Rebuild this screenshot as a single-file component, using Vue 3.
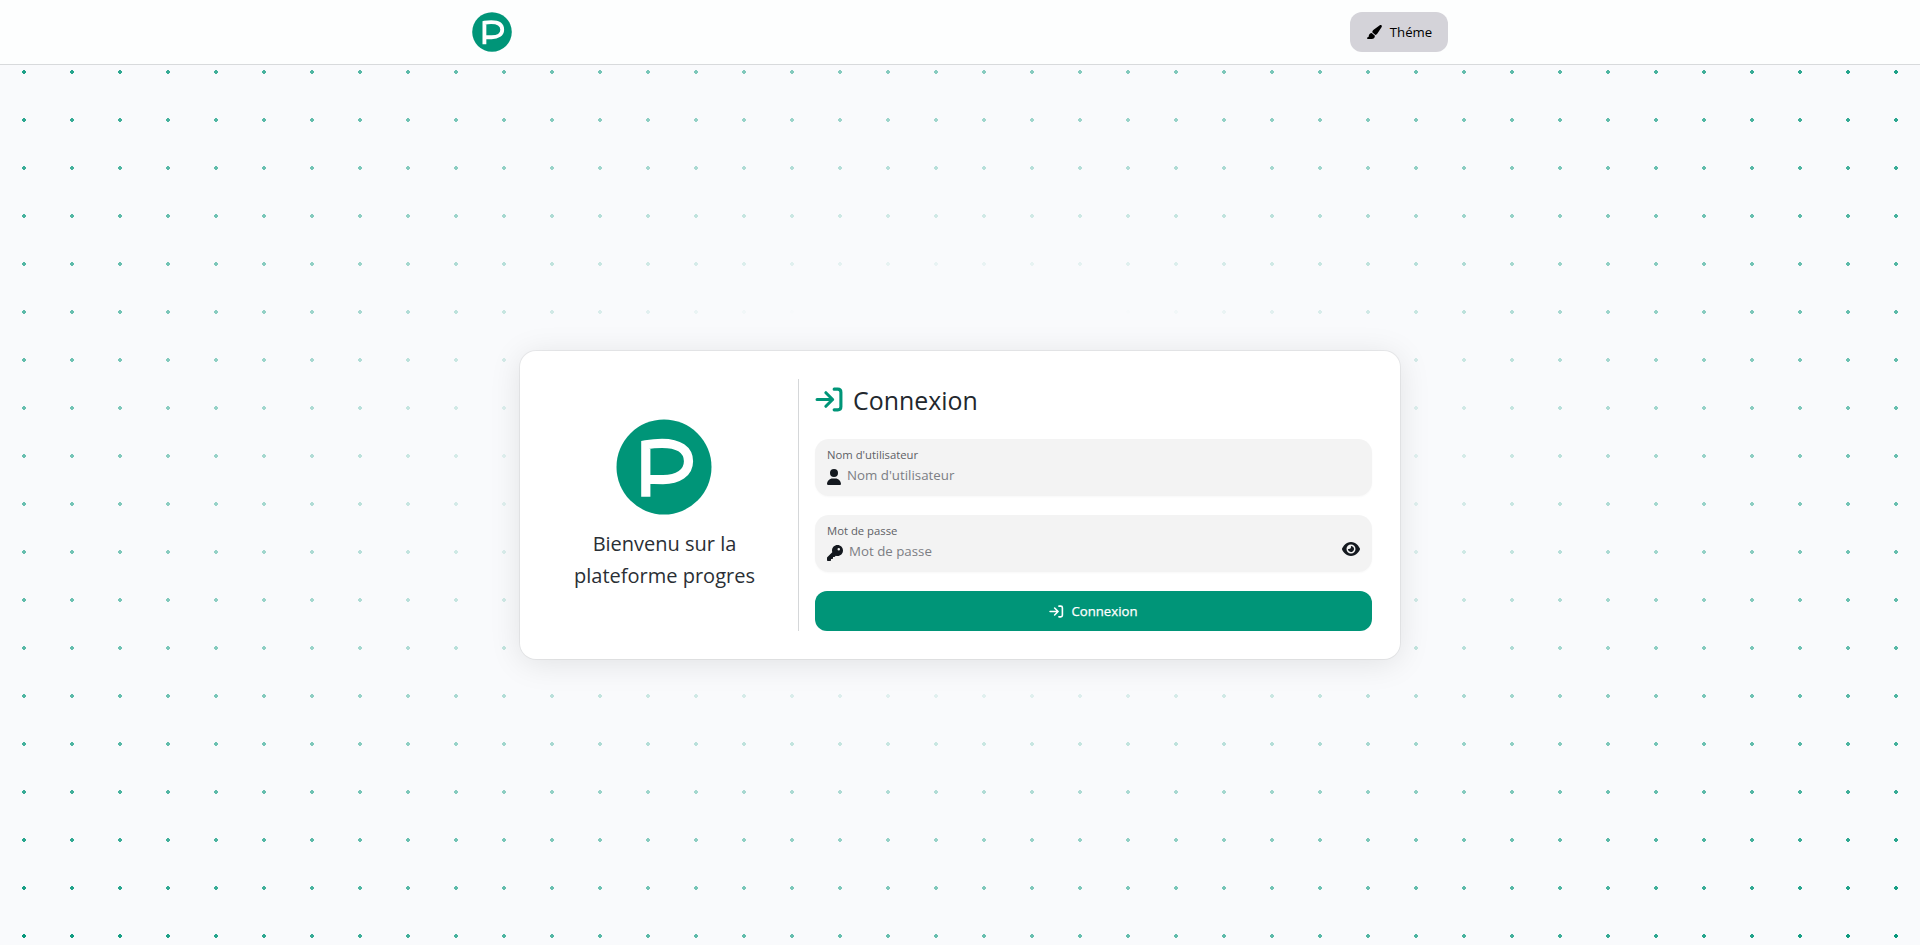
<script setup>
</script>

<template>
  <div class="page">
    <div class="dots"></div>
    <header class="bar">
      <div class="inner">
        <svg class="logo" viewBox="0 0 96 96">
          <circle cx="48" cy="48" r="47.5" fill="#009578" />
          <path d="M29.800 77.700V25.800Q38 24.300 46 24.300C63 24.300 72.500 31 72.500 42.300C72.500 54 62 60.600 47 60.600Q38 60.600 29.800 60" fill="none" stroke="#fff" stroke-width="9.200" />
        </svg>
        <button class="theme">
          <svg viewBox="0 0 576 512"><path d="M339.300 367.100c27.300-3.900 51.900-19.400 67.200-42.900L568.200 74.100c12.600-19.500 9.400-45.300-7.600-61.200S517.700-4.400 499.100 9.600L262.400 187.200c-24 18-38.200 46.100-38.400 76.100zm-19.600 25.400l-116-104.400C143.900 290.300 96 339.600 96 400c0 3.900.2 7.800.6 11.600C98.400 429.100 86.400 448 68.800 448H64c-17.700 0-32 14.300-32 32s14.300 32 32 32h144c61.900 0 112-50.100 112-112 0-2.500-.1-5-.3-7.500" /></svg>
          <span>Théme</span>
        </button>
      </div>
    </header>
    <main>
      <section class="card">
        <div class="welcome">
          <svg class="big" viewBox="0 0 96 96">
            <circle cx="48" cy="48" r="47.500" fill="#009578" />
            <path d="M29.800 77.700V25.800Q38 24.300 46 24.300C63 24.300 72.500 31 72.500 42.300C72.500 54 62 60.600 47 60.600Q38 60.600 29.800 60" fill="none" stroke="#fff" stroke-width="9.200" />
          </svg>
          <p>Bienvenu sur la<br />plateforme progres</p>
        </div>
        <form class="login" @submit.prevent>
          <h1>
            <svg viewBox="0 0 28 28"><path d="M2 14H17M10.500 7.500L17 14L10.500 20.500M18.500 4H22Q25 4 25 7V21Q25 24 22 24H18.500" /></svg>
            <span>Connexion</span>
          </h1>
          <div class="field">
            <label>Nom d'utilisateur</label>
            <div class="row">
              <svg class="user" viewBox="0 0 448 512"><path d="M224 256a128 128 0 1 0 0-256 128 128 0 1 0 0 256m-45.700 48C79.800 304 0 383.800 0 482.300 0 498.700 13.300 512 29.700 512h388.600c16.400 0 29.700-13.300 29.700-29.700 0-98.500-79.800-178.300-178.300-178.300z" /></svg>
              <span class="ph">Nom d'utilisateur</span>
            </div>
          </div>
          <div class="field">
            <label>Mot de passe</label>
            <div class="row">
              <svg class="key" viewBox="0 0 512 512"><path d="M336 352c97.200 0 176-78.800 176-176S433.200 0 336 0 160 78.800 160 176c0 18.700 2.900 36.800 8.300 53.700L7 391c-4.500 4.500-7 10.600-7 17v80c0 13.300 10.700 24 24 24h80c13.300 0 24-10.700 24-24v-40h40c13.300 0 24-10.700 24-24v-40h40c6.400 0 12.500-2.500 17-7l33.300-33.300c16.900 5.400 35 8.300 53.700 8.300m40-256a40 40 0 1 1 0 80 40 40 0 1 1 0-80" /></svg>
              <span class="ph">Mot de passe</span>
            </div>
            <svg class="eye" viewBox="0 0 576 512"><path fill-rule="evenodd" d="M288 32c-80.800 0-145.500 36.800-192.600 80.600C48.600 156 17.300 208 2.500 243.700c-3.300 7.900-3.300 16.700 0 24.600C17.300 304 48.600 356 95.400 399.400 142.500 443.200 207.200 480 288 480s145.500-36.800 192.600-80.600c46.800-43.500 78.100-95.400 93-131.100 3.300-7.900 3.300-16.700 0-24.600-14.900-35.700-46.200-87.700-93-131.100C433.500 68.800 368.800 32 288 32M144 256a144 144 0 1 1 288 0 144 144 0 1 1-288 0m144-64c0 35.300-28.700 64-64 64-7.100 0-13.900-1.200-20.300-3.300-5.500-1.800-11.900 1.600-11.700 7.400.3 6.900 1.300 13.800 3.200 20.700 13.700 51.200 66.400 81.600 117.600 67.900s81.600-66.400 67.900-117.600c-11.100-41.500-47.800-69.400-88.600-71.100-5.800-.2-9.200 6.100-7.400 11.700 2.100 6.400 3.300 13.200 3.300 20.300" /></svg>
          </div>
          <button class="submit">
            <svg viewBox="0 0 28 28"><path d="M2 14H17M10.500 7.500L17 14L10.500 20.500M18.500 4H22Q25 4 25 7V21Q25 24 22 24H18.500" /></svg>
            <span>Connexion</span>
          </button>
        </form>
      </section>
    </main>
  </div>
</template>

<style>
body { margin: 0; overflow: hidden; }
</style>
<style scoped>
* { box-sizing: border-box; }
.page { position: relative; height: 945px; display: flex; flex-direction: column; background: #f9fafc; font-family: "Open Sans", "Noto Sans", sans-serif; color: #14191f; }
.dots { position: absolute; inset: 0; background: radial-gradient(circle at center, #009578 2px, transparent 2px) 0 0 / 48px 48px; mask-image: radial-gradient(ellipse at center, transparent 26.5%, #000 100%); }
.bar { position: relative; height: 65px; border-bottom: 1px solid #d8dadc; background: #fdfefe; }
.inner { width: 976px; height: 64px; margin: 0 auto; display: flex; align-items: center; justify-content: space-between; }
.logo { width: 40px; height: 40px; }
button { border: 0; font-family: inherit; padding: 0; display: flex; align-items: center; justify-content: center; }
.theme { width: 98px; height: 40px; border-radius: 12px; background: #d4d3d9; color: #000; gap: 8px; font-size: 13.2px; }
.theme svg { width: 16px; height: 14px; }
main { position: relative; flex: 1; display: flex; align-items: center; justify-content: center; }
.card { width: 880px; height: 308px; background: #fff; border-radius: 16px; padding: 28px; display: flex; box-shadow: 0 0 0 1px rgba(0, 0, 0, .05), 0 4px 32px rgba(0, 0, 0, .1); }
.welcome { width: 251px; border-right: 1px solid #d5d7d9; display: flex; flex-direction: column; align-items: center; padding: 40px 17px 0 0; }
.big { width: 96px; height: 96px; flex: none; margin-left: -1px; }
.welcome p { margin: 13px 0 0; font-size: 20px; line-height: 32px; text-align: center; white-space: nowrap; color: #2a2f35; }
.login { width: 557px; margin-left: 16px; }
h1 { display: flex; align-items: center; margin: 0; height: 42px; font-size: 24.9px; font-weight: 400; gap: 9.5px; color: #22272d; }
h1 svg { width: 29px; height: 29px; margin: 0 0 2px -.5px; }
h1 path, .submit path { fill: none; stroke: #009578; stroke-width: 3; stroke-linecap: round; stroke-linejoin: round; }
.submit path { stroke: #fff; }
.field { position: relative; height: 57px; background: #f3f3f3; border-radius: 14px; margin: 18px 0 19px; padding: 8px 12px; box-shadow: 0 1px 2px rgba(0, 0, 0, .03); }
label { display: block; font-size: 11.3px; line-height: 16px; color: #5d6065; }
.row { display: flex; align-items: center; height: 22px; margin-top: 1px; }
.ph { font-size: 13.3px; line-height: 20px; margin-bottom: 1px; color: #7c7e84; }
.user { width: 14px; height: 16px; margin: 4px 6px 0 0; }
.key { width: 16px; height: 16px; margin: 3px 6px 0 0; }
.eye { position: absolute; right: 12px; top: 26px; width: 18px; height: 16px; }
.submit { width: 100%; height: 40px; border-radius: 12px; background: #009578; color: #fff; font-size: 13.2px; font-weight: 500; gap: 7px; }
.submit span { -webkit-text-stroke: .25px #fff; }
.submit svg { width: 15px; height: 15px; }
svg { fill: currentColor; flex: none; display: block; }
</style>
